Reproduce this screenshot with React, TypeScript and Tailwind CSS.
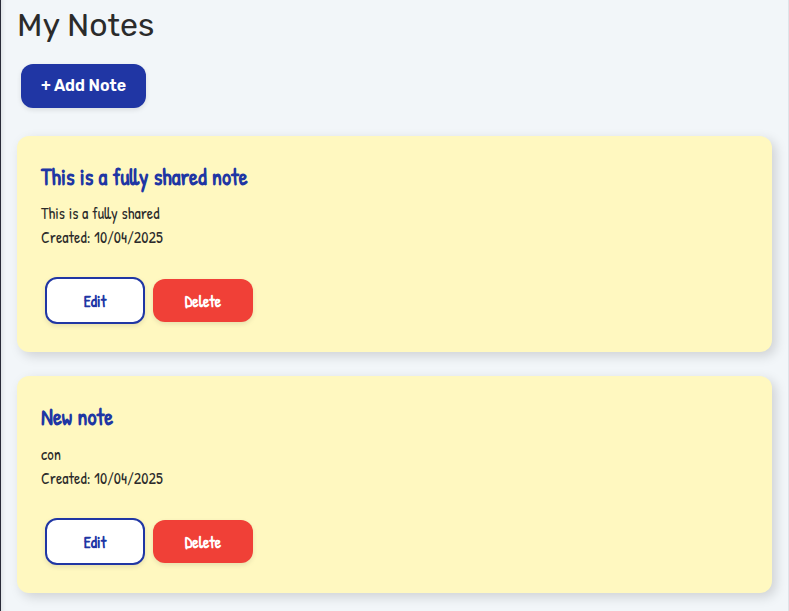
type Note = { title: string; body: string; created: string; bodyGap: string; height: string };

const notes: Note[] = [
  {
    title: "This is a fully shared note",
    body: "This is a fully shared",
    created: "10/04/2025",
    bodyGap: "mt-2",
    height: "h-[216px]",
  },
  {
    title: "New note",
    body: "con",
    created: "10/04/2025",
    bodyGap: "mt-[9px]",
    height: "h-[217px]",
  },
];

const hand = "font-['Patrick_Hand','Liberation_Sans_Narrow','Liberation_Sans',sans-serif]";

function NoteCard({ note }: { note: Note }) {
  return (
    <article
      className={`${hand} ${note.height} flex flex-col rounded-xl bg-[#fff8c0] px-6 pt-[25px] text-[#2b2b2b] shadow-[4px_4px_12px_rgba(0,0,0,0.15)]`}
    >
      <h2 className="h-8 whitespace-nowrap text-[22.4px] font-bold leading-8 text-[#2036a4]">
        {note.title}
      </h2>
      <div className={`${note.bodyGap} whitespace-nowrap text-base leading-6`}>
        <p>{note.body}</p>
        <p>Created: {note.created}</p>
      </div>
      <div className="ml-1 mt-auto mb-7 flex items-center gap-2">
        <button className="h-[47px] w-[100px] rounded-xl border-2 border-[#2036a4] bg-white text-base font-bold text-[#2036a4] shadow-[0_2px_5px_rgba(0,0,0,0.1)]">
          Edit
        </button>
        <button className="h-[43px] w-[100px] rounded-xl bg-[#f04037] text-base font-bold text-white shadow-[0_2px_5px_rgba(0,0,0,0.1)]">
          Delete
        </button>
      </div>
    </article>
  );
}

export default function App() {
  return (
    <main className="h-[611px] overflow-hidden border-l border-r border-l-[#292b38] border-r-[#dfe3e8] bg-[#f2f6f9] pl-4 pr-4 font-[Rubik,Roboto,sans-serif] text-[#2b2b2b] shadow-[inset_5px_0_5px_-4px_rgba(0,0,0,0.1)]">
      <h1 className="h-[50px] whitespace-nowrap text-[32px] leading-[50px]">My Notes</h1>
      <button className="ml-1 mt-3.5 block h-11 w-[125px] whitespace-nowrap rounded-xl bg-[#2036a4] text-base font-semibold text-white shadow-[0_2px_5px_rgba(0,0,0,0.1)]">
        + Add Note
      </button>
      <section className="mt-7 flex flex-col gap-6">
        {notes.map((n) => (
          <NoteCard key={n.title} note={n} />
        ))}
      </section>
    </main>
  );
}
